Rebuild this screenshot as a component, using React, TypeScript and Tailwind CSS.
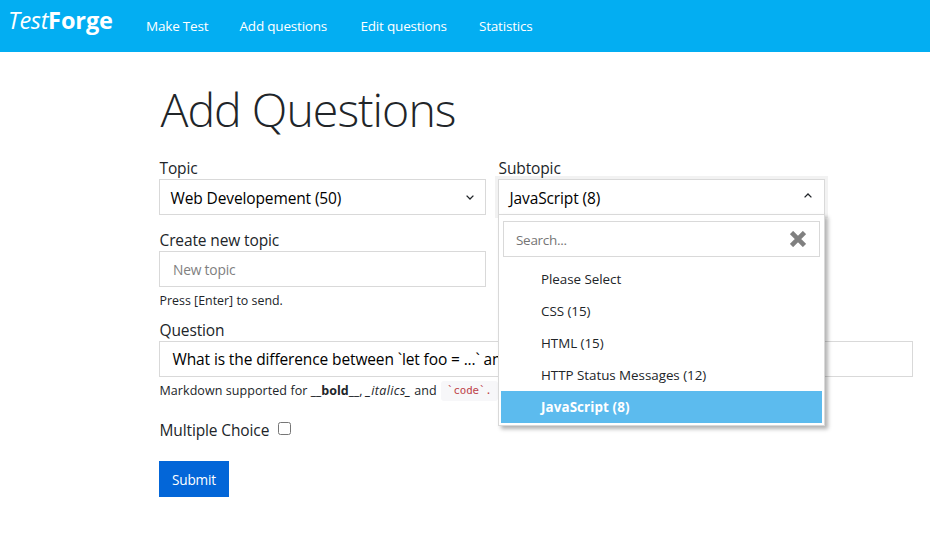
const subtopics = ['Please Select', 'CSS (15)', 'HTML (15)', 'HTTP Status Messages (12)'];

function Chevron({ up = false }: { up?: boolean }) {
  return (
    <svg width="8" height="5" viewBox="0 0 8 5" fill="none" stroke="#212529" strokeWidth="1.3">
      <path d={up ? 'M.6 4.4 4 1l3.4 3.4' : 'M.6.6 4 4 7.4.6'} />
    </svg>
  );
}

function Label({ children }: { children: string }) {
  return <label className="block h-[21px] pl-[0.5px] leading-[21px]">{children}</label>;
}

export default function App() {
  return (
    <div className="h-[543px] w-[930px] overflow-hidden bg-white font-['Open_Sans','Noto_Sans',sans-serif] text-[15.5px] tracking-[-0.12px] text-[#212529]">
      <header className="flex h-[52px] bg-[#03aef2] whitespace-nowrap text-white">
        <div className="ml-[8px] w-[138px] text-[23.5px] leading-[40px] tracking-[-0.1px]">
          <em className="font-medium tracking-[-0.3px]">Test</em>
          <b>Forge</b>
        </div>
        <nav className="flex text-[13.5px] leading-[53px] tracking-[-0.2px]">
          <a className="w-[93.5px]">Make Test</a>
          <a className="w-[121px]">Add questions</a>
          <a className="w-[118.5px]">Edit questions</a>
          <a>Statistics</a>
        </nav>
      </header>
      <main className="ml-[159px] w-[754px] pt-[28px] whitespace-nowrap">
        <h1 className="h-[78px] pl-[1.5px] text-[46.5px] leading-[59px] font-light tracking-[-1px]">Add Questions</h1>
        <div className="flex gap-3">
          <section className="w-[327px]">
            <Label>Topic</Label>
            <div className="flex h-9 items-center justify-between border border-[#d9d9d9] pr-[11px] pl-[10.5px] text-black">
              <span className="pt-[3px]">Web Developement (50)</span>
              <Chevron />
            </div>
            <div className="pt-[15px]">
              <Label>Create new topic</Label>
            </div>
            <div className="flex h-9 items-center border border-[#d9d9d9] pt-[3px] pl-[13px] text-[13.8px] tracking-[-0.2px] text-[#808080]">
              New topic
            </div>
          </section>
          <section className="relative w-[327px]">
            <Label>Subtopic</Label>
            <div className="flex h-9 items-center justify-between border border-[#d9d9d9] pr-[12px] pl-[10.5px] text-black shadow-[0_0_0_3px_#f2f2f2]">
              <span className="pt-[3px]">JavaScript (8)</span>
              <span className="pb-[3px]"><Chevron up /></span>
            </div>
            <div className="absolute top-[56px] left-0 z-10 h-[212px] w-[327px] border border-[#d9d9d9] bg-white px-[2px] shadow-[3px_3px_4px_rgba(0,0,0,0.3)]">
              <div className="mx-[2px] my-[6px] flex h-9 items-center justify-between border border-[#d9d9d9] pr-[13px] pl-3 text-[13.5px] tracking-[-0.3px] text-[#757575]">
                <span className="pt-[3px]">Search...</span>
                <svg width="16" height="16" viewBox="0 0 16 16" stroke="#808080" strokeWidth="4.6">
                  <path d="m1.5 1.5 13 13M14.500 1.5l-13 13" />
                </svg>
              </div>
              <ul className="text-[13.4px] leading-8">
                {subtopics.map((s) => (
                  <li key={s} className="h-8 pl-10 tracking-[-0.04px]">{s}</li>
                ))}
                <li className="h-8 bg-[#5cbbee] pl-10 font-bold tracking-[0.1px] text-white">JavaScript (8)</li>
              </ul>
            </div>
          </section>
        </div>
        <p className="h-[33px] pt-[5px] pl-[0.5px] text-[12.4px] leading-[18px] tracking-[0.01px]">
          Press [Enter] to send.
        </p>
        <Label>Question</Label>
        <div className="flex h-9 items-center border border-[#d9d9d9] pl-[12.5px] text-black">
          <span className="pt-px">What is the difference between `let foo = ...` and</span>
        </div>
        <p className="flex h-[42px] pt-[4px] pl-[0.5px] text-[12.5px] leading-[19px]">
          <span className="w-[281.5px] tracking-[0.07px]">
            Markdown supported for <b>__bold__</b>, <i className="tracking-[0.4px]">_italics_</i> and
          </span>
          <code className="h-5 rounded-[3px] bg-[#f7f7f9] px-[6px] font-['DejaVu_Sans_Mono',monospace] text-[10.8px] leading-[20px] text-[#bd4147]">
            `code`.
          </code>
        </p>
        <div className="flex h-[42px] pl-[0.5px] leading-[23px]">
          <span className="w-[118.5px]">Multiple Choice</span>
          <input type="checkbox" className="mt-[3px] size-[13px]" />
        </div>
        <button className="h-9 w-[70px] bg-[#0366d8] pt-[3px] text-[13.6px] tracking-[-0.2px] text-white">Submit</button>
      </main>
    </div>
  );
}
